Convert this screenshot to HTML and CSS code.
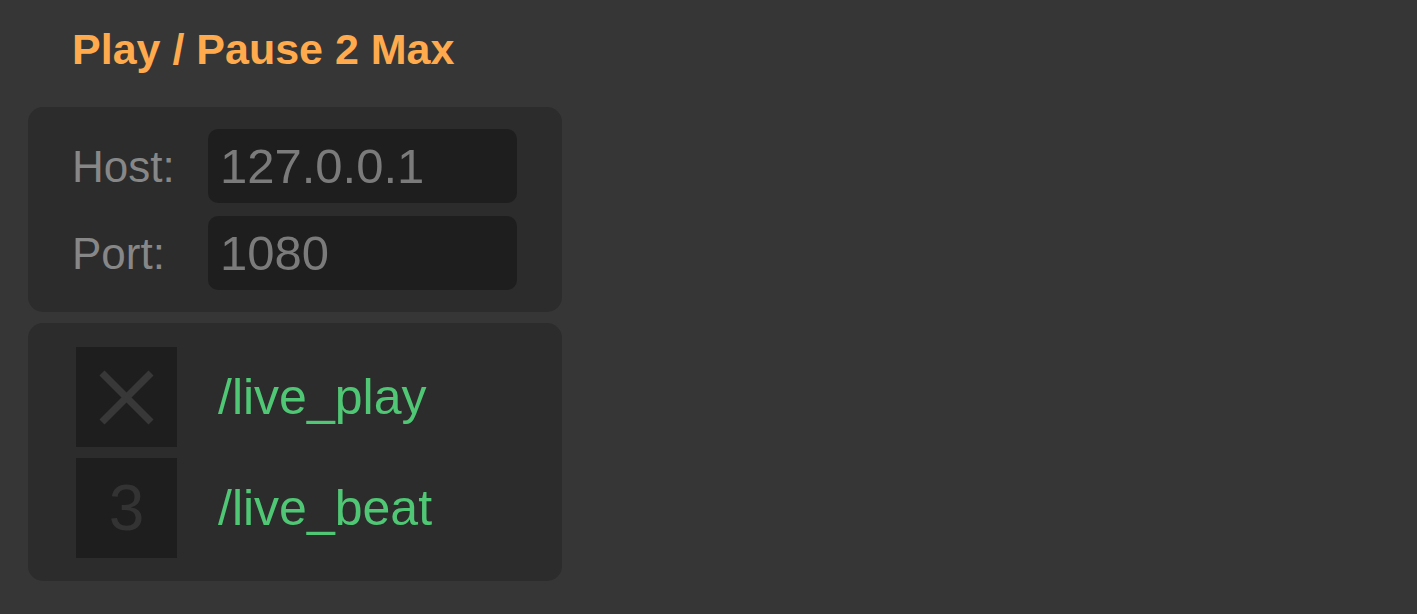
FILE: index.html
```html
<!DOCTYPE html>
<html>
<head>
<meta charset="utf-8">
<link rel="stylesheet" href="styles.css">
</head>
<body>
<div class="page">
  <h1 class="title">Play / Pause 2 Max</h1>
  <div class="panel conn">
    <div class="field">
      <span class="label">Host:</span>
      <div class="input">127.0.0.1</div>
    </div>
    <div class="field">
      <span class="label">Port:</span>
      <div class="input">1080</div>
    </div>
  </div>
  <div class="panel msgs">
    <div class="msg">
      <div class="box">
        <svg class="xicon" width="101" height="100" viewBox="0 0 101 100">
          <line x1="26" y1="26" x2="75" y2="75" />
          <line x1="75" y1="26" x2="26" y2="75" />
        </svg>
      </div>
      <span class="addr">/live_play</span>
    </div>
    <div class="msg">
      <div class="box"><span class="beat">3</span></div>
      <span class="addr">/live_beat</span>
    </div>
  </div>
</div>
</body>
</html>
```

FILE: styles.css
```css
html, body {
  margin: 0;
  padding: 0;
  background: #363636;
  font-family: "Liberation Sans", Arial, sans-serif;
}
.page {
  width: 1417px;
  height: 614px;
  padding-top: 28px;
  box-sizing: border-box;
}
.title {
  margin: 0 0 37px 72px;
  font-size: 43px;
  line-height: 42px;
  font-weight: bold;
  color: #ffaa4d;
}
.panel {
  margin-left: 28px;
  width: 534px;
  background: #2c2c2c;
  border-radius: 15px;
  box-sizing: border-box;
}
.conn {
  height: 205px;
  padding: 22px 0 0 44px;
  display: flex;
  flex-direction: column;
  gap: 13px;
}
.field {
  display: flex;
  align-items: center;
  height: 74px;
}
.label {
  width: 136px;
  font-size: 44px;
  line-height: 44px;
  color: #878787;
  position: relative;
  top: 1px;
}
.input {
  width: 309px;
  height: 74px;
  background: #1e1e1e;
  border-radius: 10px;
  box-sizing: border-box;
  padding-left: 12px;
  font-size: 49px;
  line-height: 74px;
  color: #7b7b7b;
}
.msgs {
  margin-top: 11px;
  height: 258px;
  padding: 24px 0 0 48px;
  display: flex;
  flex-direction: column;
  gap: 11px;
}
.msg {
  display: flex;
  align-items: center;
  height: 100px;
}
.box {
  width: 101px;
  height: 100px;
  background: #1e1e1e;
  display: flex;
  align-items: center;
  justify-content: center;
  flex: none;
}
.xicon line {
  stroke: #383838;
  stroke-width: 7;
}
.beat {
  font-size: 64px;
  line-height: 100px;
  color: #333333;
}
.addr {
  margin-left: 41px;
  font-size: 50px;
  line-height: 100px;
  color: #4fc774;
}
```
